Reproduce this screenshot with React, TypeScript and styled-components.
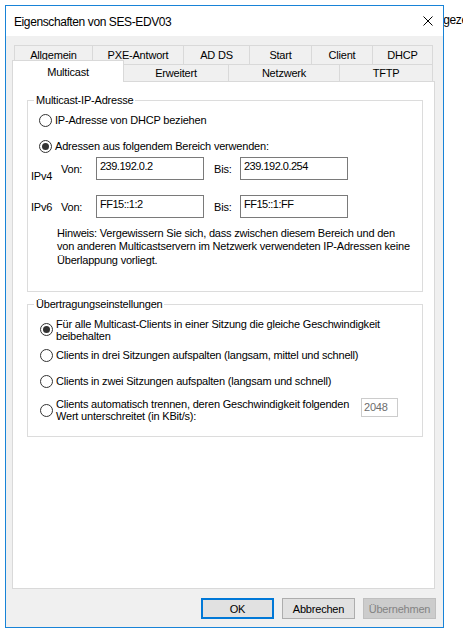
import React from "react";
import styled, { createGlobalStyle } from "styled-components";

const GlobalStyle = createGlobalStyle`
  html, body { margin: 0; padding: 0; background: #fff; }
  body {
    font-family: "Liberation Sans", Arial, sans-serif;
    font-size: 11px;
    color: #000;
  }
`;

const Desktop = styled.div`
  position: relative;
  width: 463px;
  height: 630px;
  overflow: hidden;
  background: #fff;
  padding: 5px 0 0 5px;
  box-sizing: border-box;
`;

// text of the window lying behind the dialog
const BehindText = styled.span`
  position: absolute;
  left: 437px;
  top: 13px;
  font-size: 12px;
  letter-spacing: -0.4px;
  white-space: nowrap;
`;

const Window = styled.div`
  position: relative;
  width: 439px;
  height: 623px;
  box-sizing: border-box;
  border: 1px solid #1883d7;
  background: #f0f0f0;
  display: flex;
  flex-direction: column;
`;

const TitleBar = styled.div`
  height: 30px;
  flex: none;
  background: #fff;
  display: flex;
  align-items: center;
  justify-content: space-between;
  padding: 0 10px 0 8px;
`;

const Title = styled.span`
  font-size: 12px;
  letter-spacing: -0.4px;
  margin-top: 1px;
`;

const Body = styled.div`
  flex: 1;
  display: flex;
  flex-direction: column;
  padding: 9px 8px 8px 6px;
  letter-spacing: -0.2px;
`;

const TabRow = styled.div<{ $front?: boolean }>`
  display: flex;
  align-items: flex-end;
  height: ${(p) => (p.$front ? 21 : 19)}px;
  margin-left: ${(p) => (p.$front ? 0 : 2)}px;
  margin-top: ${(p) => (p.$front ? -4 : 0)}px;
  position: ${(p) => (p.$front ? "relative" : "static")};
  z-index: ${(p) => (p.$front ? 1 : 0)};
`;

const Tab = styled.div<{ $w: number; $active?: boolean; $back?: boolean }>`
  box-sizing: border-box;
  width: ${(p) => p.$w + 1}px;
  height: ${(p) => (p.$active ? 22 : p.$back ? 19 : 17)}px;
  margin-bottom: ${(p) => (p.$active ? -1 : 0)}px;
  padding-bottom: ${(p) => (p.$back ? 1 : 0)}px;
  background: ${(p) => (p.$active ? "#fff" : "#f0f0f0")};
  border: 1px solid #d9d9d9;
  border-bottom: none;
  display: flex;
  align-items: center;
  justify-content: center;
  & + & {
    margin-left: -1px;
  }
`;

const Panel = styled.div`
  box-sizing: border-box;
  width: 423px;
  height: 508px;
  background: #fff;
  border: 1px solid #d9d9d9;
  padding: 0 11px 0 14px;
`;

const GroupBox = styled.fieldset<{ $top: number; $bottom: number }>`
  margin: ${(p) => p.$top}px 0 0 0;
  padding: 0 0 ${(p) => p.$bottom}px 0;
  border: 1px solid #dcdcdc;
  min-width: 0;
`;

const Legend = styled.legend`
  margin-left: 6px;
  padding: 0 2px;
  line-height: 13px;
  font-size: 11px;
`;

const RadioRow = styled.label<{ $top: number; $indent: number }>`
  display: flex;
  align-items: center;
  margin-top: ${(p) => p.$top}px;
  padding-left: ${(p) => p.$indent}px;
  line-height: 13px;
  white-space: nowrap;
`;

const RadioCircle = styled.span<{ $checked?: boolean }>`
  flex: none;
  box-sizing: border-box;
  width: 13px;
  height: 13px;
  border: 1px solid #333;
  border-radius: 50%;
  background: #fff;
  margin-right: 3px;
  display: grid;
  place-items: center;
  &::after {
    content: "";
    width: 7px;
    height: 7px;
    border-radius: 50%;
    background: ${(p) => (p.$checked ? "#333" : "transparent")};
  }
`;

const MultiLine = styled.span<{ $lh: number }>`
  line-height: ${(p) => p.$lh}px;
  white-space: nowrap;
`;

const AddressRow = styled.div<{ $top: number }>`
  display: grid;
  grid-template-columns: 30px 35px 108px 10px 26px 108px;
  align-items: center;
  margin-top: ${(p) => p.$top}px;
  padding-left: 3px;
`;

const ProtoLabel = styled.span<{ $drop?: boolean }>`
  padding-top: ${(p) => (p.$drop ? 15 : 0)}px;
`;

const TextBox = styled.div`
  box-sizing: border-box;
  height: 23px;
  border: 1px solid #7a7a7a;
  background: #fff;
  padding: 2px 3px;
  line-height: 13px;
  letter-spacing: -0.5px;
`;

const Note = styled.p`
  margin: 9px 0 0 0;
  padding-left: 29px;
  line-height: 13.3px;
  white-space: nowrap;
`;

const ThresholdRow = styled.div`
  display: flex;
  align-items: flex-start;
  margin-top: 10px;
  padding: 0 24px 0 12px;
`;

const ThresholdLabel = styled.label`
  display: flex;
  align-items: center;
`;

const SmallBox = styled.div`
  box-sizing: border-box;
  margin-left: auto;
  width: 37px;
  height: 19px;
  border: 1px solid #cccccc;
  color: #6d6d6d;
  padding: 2px 2px;
  line-height: 13px;
`;

const ButtonRow = styled.div`
  display: flex;
  justify-content: flex-end;
  gap: 8px;
  margin: 9px -1px 0 0;
`;

const Button = styled.button<{ $variant?: "default" | "disabled" }>`
  box-sizing: border-box;
  width: 73px;
  height: 21px;
  padding: 0;
  font-family: inherit;
  font-size: 11px;
  letter-spacing: -0.2px;
  color: ${(p) => (p.$variant === "disabled" ? "#838383" : "#000")};
  background: ${(p) => (p.$variant === "disabled" ? "#cccccc" : "#e1e1e1")};
  border: ${(p) =>
    p.$variant === "default"
      ? "2px solid #0078d7"
      : p.$variant === "disabled"
      ? "1px solid #bfbfbf"
      : "1px solid #adadad"};
`;

const CloseIcon = () => (
  <svg width="10" height="10" viewBox="0 0 10 10">
    <path d="M0.5 0.5 L9.5 9.5 M9.5 0.5 L0.5 9.5" stroke="#000" strokeWidth="1" />
  </svg>
);

const backTabs = [
  { label: "Allgemein", w: 78 },
  { label: "PXE-Antwort", w: 91 },
  { label: "AD DS", w: 66 },
  { label: "Start", w: 62 },
  { label: "Client", w: 61 },
  { label: "DHCP", w: 60 },
];

const frontTabs = [
  { label: "Multicast", w: 111, active: true },
  { label: "Erweitert", w: 105 },
  { label: "Netzwerk", w: 111 },
  { label: "TFTP", w: 93 },
];

const App = () => {
  return (
    <Desktop>
      <GlobalStyle />
      <BehindText>ngeze</BehindText>
      <Window>
        <TitleBar>
          <Title>Eigenschaften von SES-EDV03</Title>
          <CloseIcon />
        </TitleBar>
        <Body>
          <TabRow>
            {backTabs.map((t) => (
              <Tab key={t.label} $w={t.w} $back>
                {t.label}
              </Tab>
            ))}
          </TabRow>
          <TabRow $front>
            {frontTabs.map((t) => (
              <Tab key={t.label} $w={t.w} $active={t.active}>
                {t.label}
              </Tab>
            ))}
          </TabRow>
          <Panel>
            <GroupBox $top={12} $bottom={24}>
              <Legend>Multicast-IP-Adresse</Legend>
              <RadioRow $top={7} $indent={11}>
                <RadioCircle />
                IP-Adresse von DHCP beziehen
              </RadioRow>
              <RadioRow $top={13} $indent={11}>
                <RadioCircle $checked />
                Adressen aus folgendem Bereich verwenden:
              </RadioRow>
              <AddressRow $top={2}>
                <ProtoLabel $drop>IPv4</ProtoLabel>
                <span>Von:</span>
                <TextBox>239.192.0.2</TextBox>
                <span />
                <span>Bis:</span>
                <TextBox>239.192.0.254</TextBox>
              </AddressRow>
              <AddressRow $top={13}>
                <ProtoLabel>IPv6</ProtoLabel>
                <span>Von:</span>
                <TextBox>FF15::1:2</TextBox>
                <span />
                <span>Bis:</span>
                <TextBox>FF15::1:FF</TextBox>
              </AddressRow>
              <Note>
                Hinweis: Vergewissern Sie sich, dass zwischen diesem Bereich und den
                <br />
                von anderen Multicastservern im Netzwerk verwendeten IP-Adressen keine
                <br />
                Überlappung vorliegt.
              </Note>
            </GroupBox>
            <GroupBox $top={6} $bottom={13}>
              <Legend>Übertragungseinstellungen</Legend>
              <RadioRow $top={7} $indent={12}>
                <RadioCircle $checked />
                <MultiLine $lh={12}>
                  Für alle Multicast-Clients in einer Sitzung die gleiche Geschwindigkeit
                  <br />
                  beibehalten
                </MultiLine>
              </RadioRow>
              <RadioRow $top={7} $indent={12}>
                <RadioCircle />
                Clients in drei Sitzungen aufspalten (langsam, mittel und schnell)
              </RadioRow>
              <RadioRow $top={13} $indent={12}>
                <RadioCircle />
                Clients in zwei Sitzungen aufspalten (langsam und schnell)
              </RadioRow>
              <ThresholdRow>
                <ThresholdLabel>
                  <RadioCircle />
                  <MultiLine $lh={12.5}>
                    Clients automatisch trennen, deren Geschwindigkeit folgenden
                    <br />
                    Wert unterschreitet (in KBit/s):
                  </MultiLine>
                </ThresholdLabel>
                <SmallBox>2048</SmallBox>
              </ThresholdRow>
            </GroupBox>
          </Panel>
          <ButtonRow>
            <Button $variant="default">OK</Button>
            <Button>Abbrechen</Button>
            <Button $variant="disabled">Übernehmen</Button>
          </ButtonRow>
        </Body>
      </Window>
    </Desktop>
  );
};

export default App;
